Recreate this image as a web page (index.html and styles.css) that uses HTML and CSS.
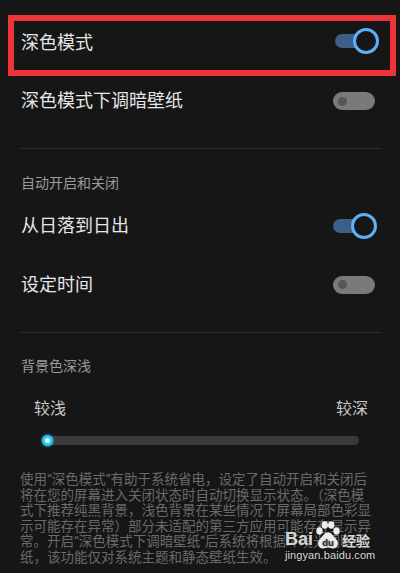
FILE: index.html
```html
<!DOCTYPE html>
<html lang="zh-CN">
<head>
	<meta charset="utf-8">
	<title>深色模式</title>
	<link rel="stylesheet" href="styles.css">
</head>
<body>
<main class="page">
	<div class="row row-mark">
		<span class="label">深色模式</span>
		<span class="switch on"><span class="knob"></span></span>
	</div>
	<div class="row row-first">
		<span class="label">深色模式下调暗壁纸</span>
		<span class="switch off"><span class="dot"></span></span>
	</div>

	<div class="divider div-one"></div>

	<div class="section section-auto">自动开启和关闭</div>
	<div class="row row-tall">
		<span class="label">从日落到日出</span>
		<span class="switch on"><span class="knob"></span></span>
	</div>
	<div class="row row-tall">
		<span class="label">设定时间</span>
		<span class="switch off"><span class="dot"></span></span>
	</div>

	<div class="divider div-two"></div>

	<div class="section section-bg">背景色深浅</div>
	<div class="levels">
		<span>较浅</span>
		<span>较深</span>
	</div>
	<div class="slider"><span class="thumb"></span></div>

	<p class="note">使用“深色模式”有助于系统省电，设定了自动开启和关闭后将在您的屏幕进入关闭状态时自动切换显示状态。（深色模式下推荐纯黑背景，浅色背景在某些情况下屏幕局部色彩显示可能存在异常）部分未适配的第三方应用可能存在显示异常。开启“深色模式下调暗壁纸”后系统将根据环境光调暗壁纸，该功能仅对系统主题和静态壁纸生效。</p>

	<!-- watermark -->
	<div class="mark">
		<div class="mark-top">
			<span class="bai">Bai</span>
			<svg class="paw" width="26" height="28" viewBox="0 0 26 28">
				<ellipse cx="4.5" cy="10" rx="3.2" ry="3.8" fill="#eee"/>
				<ellipse cx="9.8" cy="4" rx="3.2" ry="3.8" fill="#eee"/>
				<ellipse cx="16.2" cy="4" rx="3.2" ry="3.8" fill="#eee"/>
				<ellipse cx="21.5" cy="10" rx="3.2" ry="3.8" fill="#eee"/>
				<path d="M13 11.5 C9 11.5 8 15 5 18 C1.5 21.5 3 27.5 8 27.5 C10 27.5 11 26.5 13 26.5 C15 26.5 16 27.5 18 27.5 C23 27.5 24.5 21.5 21 18 C18 15 17 11.5 13 11.5 Z" fill="#eee"/>
				<text x="13" y="25" text-anchor="middle" font-family="Liberation Sans, sans-serif" font-size="9.5" font-weight="bold" fill="#2a2a2a">du</text>
			</svg>
			<span class="jy">经验</span>
		</div>
		<div class="mark-url">jingyan.baidu.com</div>
	</div>
</main>
</body>
</html>
```

FILE: styles.css
```css
body {
	margin: 0;
	background-color: #161616;
	font-family: "Roboto", "Noto Sans CJK SC", sans-serif;
}

.page {
	position: relative;
	width: 400px;
	height: 573px;
	overflow: hidden;
	display: flex;
	flex-direction: column;
}

.row {
	display: flex;
	align-items: center;
	justify-content: space-between;
	padding: 0 25px 0 21px;
	color: #e6e6e6;
	font-size: 18px;
}

.row-mark {
	height: 43px;
	margin: 15px 4px 0 8px;
	border: 6px solid #ee3438;
	padding: 0 13px 6px 7px;
}

.row-mark .switch {
	margin-bottom: 3px;
}

.row-first {
	height: 50px;
}

.row-tall {
	height: 59px;
}

.label {
	line-height: 24px;
}

.switch {
	position: relative;
	display: block;
	width: 42px;
}

.switch.on {
	height: 14px;
	border-radius: 7px;
	background-color: #3b5f86;
}

.switch.on .knob {
	position: absolute;
	right: -2px;
	top: -6px;
	box-sizing: border-box;
	width: 26px;
	height: 26px;
	border: 3px solid #5cb1f6;
	border-radius: 50%;
	background-color: #161616;
}

.switch.off {
	height: 18px;
	border-radius: 9px;
	background-color: #7a7a7a;
}

.switch.off .dot {
	position: absolute;
	left: 5px;
	top: 4.5px;
	width: 9px;
	height: 9px;
	border-radius: 50%;
	background-color: #575757;
}

.divider {
	height: 1px;
	margin: 0 18px 0 20px;
	background-color: #2b2b2b;
}

.div-one {
	margin-top: 22px;
}

.div-two {
	margin-top: 18px;
}

.section {
	margin-top: 24px;
	padding-left: 21px;
	font-size: 14px;
	line-height: 20px;
	color: #9b9b9b;
}

.section-auto {
	margin-bottom: 3px;
}

.section-bg {
	margin-top: 23px;
}

.levels {
	display: flex;
	justify-content: space-between;
	margin-top: 22px;
	padding: 0 32px 0 34px;
	font-size: 16px;
	line-height: 22px;
	color: #c8c8c8;
}

.slider {
	position: relative;
	height: 9px;
	margin: 16px 41px 0 43px;
	border-radius: 5px;
	background-color: #3a3a3a;
}

.thumb {
	position: absolute;
	left: -1px;
	top: -1px;
	box-sizing: border-box;
	width: 11px;
	height: 11px;
	border: 3px solid #25c8f7;
	border-radius: 50%;
	background-color: #f4ffff;
	box-shadow: 0 0 3px #25c8f7;
}

.note {
	margin: 27px 24px 0 20px;
	font-size: 13.5px;
	line-height: 15.5px;
	color: #6a6a6a;
}

.mark {
	position: absolute;
	left: 285px;
	top: 520px;
	color: rgba(240, 240, 240, 0.9);
	text-shadow: 0 0 2px rgba(0, 0, 0, 0.6);
}

.mark-top {
	display: flex;
	align-items: flex-end;
	height: 29px;
}

.bai {
	font-family: "Liberation Sans", sans-serif;
	font-weight: bold;
	font-size: 18px;
	line-height: 18px;
	margin-bottom: 1px;
}

.paw {
	margin: 0 1px 0 2px;
}

.jy {
	font-family: "Noto Sans CJK SC", sans-serif;
	font-weight: bold;
	font-size: 14px;
	line-height: 17px;
}

.mark-url {
	margin-top: -1px;
	font-family: "Liberation Sans", sans-serif;
	font-size: 11px;
	line-height: 14px;
	letter-spacing: 0.1px;
}
```
